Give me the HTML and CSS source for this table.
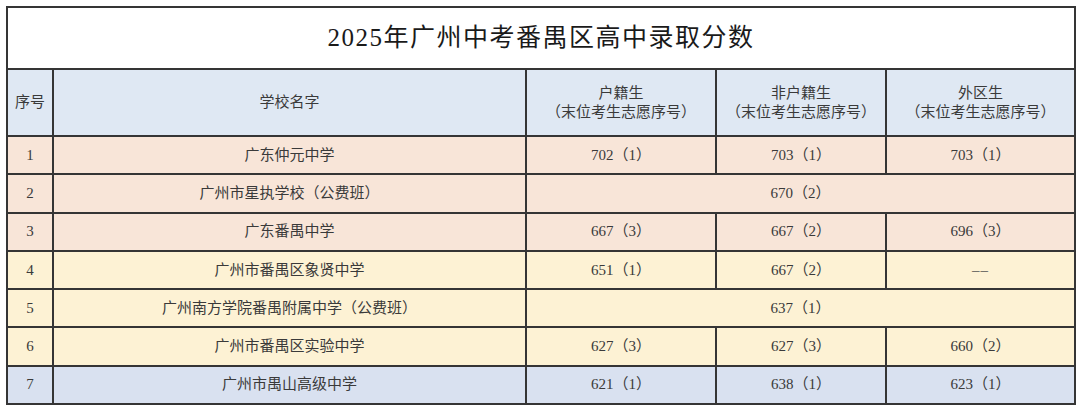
FILE: index.html
```html
<!DOCTYPE html>
<html lang="zh-CN">
<head>
<meta charset="utf-8">
<title>2025年广州中考番禺区高中录取分数</title>
<link rel="stylesheet" href="styles.css">
</head>
<body>
<div class="page">
<table class="scores">
  <colgroup>
    <col class="c-no">
    <col class="c-name">
    <col class="c-a">
    <col class="c-b">
    <col class="c-c">
  </colgroup>
  <tr class="title-row"><td colspan="5" class="title">2025年广州中考番禺区高中录取分数</td></tr>
  <tr class="head-row">
    <td>序号</td>
    <td>学校名字</td>
    <td>户籍生<br>（末位考生志愿序号）</td>
    <td>非户籍生<br>（末位考生志愿序号）</td>
    <td>外区生<br>（末位考生志愿序号）</td>
  </tr>
  <tr class="row peach"><td>1</td><td>广东仲元中学</td><td>702（1）</td><td>703（1）</td><td>703（1）</td></tr>
  <tr class="row peach"><td>2</td><td>广州市星执学校（公费班）</td><td colspan="3">670（2）</td></tr>
  <tr class="row peach"><td>3</td><td>广东番禺中学</td><td>667（3）</td><td>667（2）</td><td>696（3）</td></tr>
  <tr class="row yellow"><td>4</td><td>广州市番禺区象贤中学</td><td>651（1）</td><td>667（2）</td><td><span class="dash">––</span></td></tr>
  <tr class="row yellow"><td>5</td><td>广州南方学院番禺附属中学（公费班）</td><td colspan="3">637（1）</td></tr>
  <tr class="row yellow"><td>6</td><td>广州市番禺区实验中学</td><td>627（3）</td><td>627（3）</td><td>660（2）</td></tr>
  <tr class="row blue"><td>7</td><td>广州市禺山高级中学</td><td>621（1）</td><td>638（1）</td><td>623（1）</td></tr>
</table>
</div>
</body>
</html>
```
FILE: styles.css
```css
html, body {
  margin: 0;
  padding: 0;
  background: #ffffff;
}
.page {
  padding: 6px 0 0 6px;
}
.scores {
  border-collapse: collapse;
  table-layout: fixed;
  width: 1068px;
  font-family: "Liberation Serif", "Noto Sans CJK SC", serif;
  color: #3a3a3a;
}
.c-no { width: 46px; }
.c-name { width: 473px; }
.c-a { width: 190px; }
.c-b { width: 170px; }
.c-c { width: 189px; }
.scores td {
  border: 2px solid #353535;
  text-align: center;
  vertical-align: middle;
  padding: 0;
  font-size: 15px;
  line-height: 19px;
}
.title-row td {
  height: 60px;
  background: #ffffff;
}
.scores td.title {
  font-size: 25px;
  letter-spacing: 1.5px;
  color: #1a1a1a;
  line-height: 30px;
}
.head-row td {
  height: 65px;
  background: #dfe8f3;
}
.row td {
  height: 36.3px;
}
.dash {
  font-family: "Liberation Serif", serif;
  letter-spacing: 1px;
  color: #555555;
}
.peach td { background: #f8e5d8; }
.yellow td { background: #fdf2d4; }
.blue td { background: #d9e1f0; }
```
